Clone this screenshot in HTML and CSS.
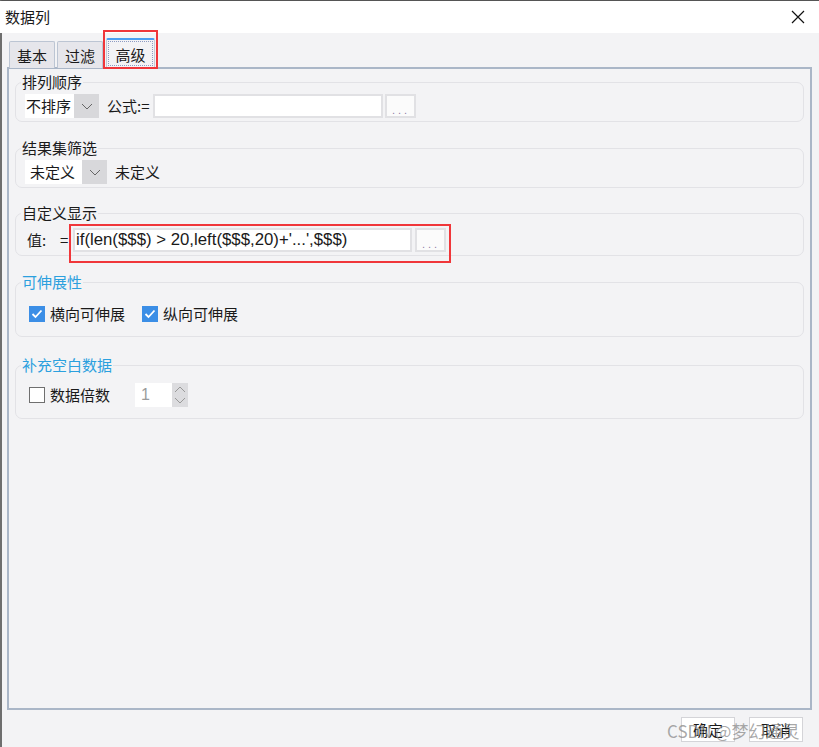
FILE: index.html
```html
<!DOCTYPE html>
<html lang="zh">
<head>
    <meta charset="UTF-8">
    <title>数据列</title>
    <link rel="stylesheet" href="styles.css">
</head>
<body>
    <div class="window">
        <div class="titlebar">
            <span class="title">数据列</span>
            <svg class="close" width="14" height="14" viewBox="0 0 14 14">
                <path d="M1 1 L13 13 M13 1 L1 13" stroke="#111" stroke-width="1.2" fill="none"/>
            </svg>
        </div>
        <div class="main">
            <div class="tabs">
                <div class="tab">基本</div>
                <div class="tab">过滤</div>
                <div class="tab active"><span class="focus">高级</span></div>
            </div>
            <div class="panel">
                <fieldset class="group g1">
                    <legend>排列顺序</legend>
                    <div class="row">
                        <div class="combo w1">
                            <span class="combo-text">不排序</span>
                            <span class="combo-btn">
                                <svg width="12" height="7" viewBox="0 0 12 7"><polyline points="1,1 6,6 11,1" fill="none" stroke="#666" stroke-width="1"/></svg>
                            </span>
                        </div>
                        <span class="label formula">公式:=</span>
                        <div class="text-input f1"></div>
                        <div class="dots-btn">...</div>
                    </div>
                </fieldset>

                <fieldset class="group g2">
                    <legend>结果集筛选</legend>
                    <div class="row">
                        <div class="combo w2">
                            <span class="combo-text">未定义</span>
                            <span class="combo-btn">
                                <svg width="12" height="7" viewBox="0 0 12 7"><polyline points="1,1 6,6 11,1" fill="none" stroke="#666" stroke-width="1"/></svg>
                            </span>
                        </div>
                        <span class="label undef">未定义</span>
                    </div>
                </fieldset>

                <fieldset class="group g3">
                    <legend>自定义显示</legend>
                    <div class="row">
                        <span class="label value">值:</span>
                        <span class="label eq">=</span>
                        <div class="marked">
                            <div class="text-input f3">if(len($$$) &gt; 20,left($$$,20)+'...',$$$)</div>
                            <div class="dots-btn">...</div>
                        </div>
                    </div>
                </fieldset>

                <fieldset class="group g4">
                    <legend class="blue">可伸展性</legend>
                    <div class="row">
                        <span class="check on">
                            <svg width="16" height="16" viewBox="0 0 16 16"><polyline points="3.5,8 6.5,11 12.5,4.5" fill="none" stroke="#fff" stroke-width="1.8"/></svg>
                        </span>
                        <span class="label">横向可伸展</span>
                        <span class="check on second">
                            <svg width="16" height="16" viewBox="0 0 16 16"><polyline points="3.5,8 6.5,11 12.5,4.5" fill="none" stroke="#fff" stroke-width="1.8"/></svg>
                        </span>
                        <span class="label">纵向可伸展</span>
                    </div>
                </fieldset>

                <fieldset class="group g5">
                    <legend class="blue">补充空白数据</legend>
                    <div class="row">
                        <span class="check"></span>
                        <span class="label">数据倍数</span>
                        <div class="spinner">
                            <span class="spin-text">1</span>
                            <span class="spin-btns">
                                <svg width="14" height="22" viewBox="0 0 14 22">
                                    <polyline points="2,8 7,3 12,8" fill="none" stroke="#999" stroke-width="1"/>
                                    <polyline points="2,14 7,19 12,14" fill="none" stroke="#999" stroke-width="1"/>
                                </svg>
                            </span>
                        </div>
                    </div>
                </fieldset>
            </div>
            <div class="buttons">
                <div class="btn">确定</div>
                <div class="btn">取消</div>
                <span class="watermark">CSDN @梦幻通灵</span>
            </div>
        </div>
    </div>
</body>
</html>
```

FILE: styles.css
```css
body {
    margin: 0;
    width: 819px;
    height: 747px;
    overflow: hidden;
    font-family: "Noto Sans CJK SC", "Noto Sans", sans-serif;
    font-size: 15px;
    color: #1a1a1a;
    background: #f3f3f5;
}
.window {
    height: 747px;
    box-sizing: border-box;
    border-left: 2px solid #6e6e6e;
    border-top: 1px solid #555;
    display: flex;
    flex-direction: column;
}
.titlebar {
    height: 32px;
    background: #fff;
    display: flex;
    align-items: center;
    justify-content: space-between;
    padding: 0 14px 0 5px;
    margin-left: -2px;
}
.title {
    font-size: 15px;
    line-height: 20px;
}
.close {
    display: block;
}
.main {
    flex: 1;
    background: #f3f3f5;
    padding: 5px 0 0 5px;
}
.tabs {
    display: flex;
    align-items: flex-end;
    gap: 2px;
    margin-left: 2px;
    height: 30px;
    position: relative;
    z-index: 2;
    margin-bottom: -1px;
}
.tab {
    height: 26px;
    padding: 0 6px;
    width: 32px;
    text-align: center;
    line-height: 27px;
    background: #e6e6eb;
    border: 1px solid #bcc5d3;
    border-bottom: none;
    border-radius: 2px 2px 0 0;
}
.tab.active {
    height: 30px;
    width: 49px;
    padding: 0 1px;
    margin-left: 1px;
    background: #f3f3f5;
    border-top: 2px solid #4b9ef2;
    border-color: #4b9ef2 #c5ccd8 #f3f3f5 #c5ccd8;
    position: relative;
    display: flex;
    justify-content: center;
    align-items: flex-start;
    box-sizing: border-box;
}
.tab.active::after {
    content: "";
    position: absolute;
    left: -4px;
    right: -4px;
    top: -10px;
    bottom: -1px;
    border: 2px solid #f0363a;
}
.focus {
    display: block;
    margin-top: 1px;
    width: 45px;
    height: 25px;
    line-height: 26px;
    border: 1px dotted #8e9cc3;
    box-sizing: border-box;
    text-align: center;
}
.panel {
    width: 805px;
    height: 643px;
    box-sizing: border-box;
    border: 2px solid #aab6c7;
    background: #f3f3f5;
    padding: 3px 6px 0 6px;
}
.group {
    margin: 0;
    padding: 0 8px 0 5px;
    border: 1px solid #e2e2e6;
    border-radius: 7px;
}
legend {
    padding: 0 1px;
    line-height: 20px;
    font-size: 15px;
}
legend.blue {
    color: #2ba0de;
}
.row {
    display: flex;
    align-items: center;
    height: 24px;
    margin-left: 4px;
}
.g1 .row { margin-top: 2px; }
.g1 { padding-bottom: 3px; }
.g2 { margin-top: 16px; padding-bottom: 3px; }
.g2 .row { margin-top: 2px; }
.g3 { margin-top: 15px; padding-bottom: 3px; }
.g3 .row { margin-top: 5px; }
.g4 { margin-top: 16px; padding-bottom: 10px; }
.g4 .row { margin-top: 10px; }
.g5 { margin-top: 18px; padding-bottom: 11px; }
.g5 .row { margin-top: 8px; }

.combo {
    display: flex;
    height: 24px;
}
.combo-text {
    background: #fff;
    line-height: 24px;
    padding-left: 1px;
}
.w1 .combo-text { width: 48px; }
.w2 .combo-text { width: 52px; padding-left: 5px; }
.combo-btn {
    width: 25px;
    background: #d8d8db;
    display: flex;
    align-items: center;
    justify-content: center;
}
.label {
    line-height: 20px;
    white-space: nowrap;
}
.formula {
    margin-left: 8px;
    width: 46px;
}
.undef {
    margin-left: 8px;
}
.value {
    margin-left: 2px;
    width: 33px;
}
.eq {
    width: 13px;
}
.text-input {
    height: 24px;
    box-sizing: border-box;
    background: #fff;
    border: 2px solid #e1e1e4;
    font-family: "Liberation Sans", Arial, sans-serif;
    font-size: 16.8px;
    line-height: 20px;
    padding-left: 2px;
    white-space: nowrap;
    overflow: hidden;
}
.f1 {
    width: 230px;
}
.f3 {
    width: 339px;
    padding-left: 1px;
}
.dots-btn {
    width: 31px;
    height: 24px;
    box-sizing: border-box;
    margin-left: 2px;
    background: #fbfbfb;
    border: 2px solid #e1e1e4;
    color: #8f7fa6;
    font-family: "Liberation Sans", Arial, sans-serif;
    font-size: 11px;
    letter-spacing: 3px;
    line-height: 28px;
    padding-left: 5px;
}
.marked .dots-btn {
    margin-left: 3px;
}
.marked {
    display: flex;
    position: relative;
}
.marked::after {
    content: "";
    position: absolute;
    left: -4px;
    right: -5px;
    top: -4px;
    bottom: -11px;
    border: 2px solid #f0363a;
}
.check {
    width: 16px;
    height: 16px;
    box-sizing: border-box;
    border: 1px solid #6f6f6f;
    background: #fff;
    margin: 0 5px 0 4px;
    display: block;
}
.check svg {
    display: block;
}
.check.on {
    border: none;
    background: #3b8ee6;
}
.check.second {
    margin-left: 17px;
}
.spinner {
    display: flex;
    height: 24px;
    margin-left: 25px;
}
.spin-text {
    width: 31px;
    background: #fff;
    color: #9b9b9b;
    font-family: "Liberation Sans", Arial, sans-serif;
    font-size: 16px;
    line-height: 24px;
    padding-left: 6px;
}
.spin-btns {
    width: 16px;
    background: #dcdcdf;
    display: flex;
    align-items: center;
    justify-content: center;
}
.buttons {
    display: flex;
    justify-content: flex-end;
    gap: 14px;
    margin-top: 7px;
    padding-right: 16px;
    position: relative;
}
.btn {
    width: 54px;
    height: 25px;
    box-sizing: border-box;
    background: #fff;
    border: 1px solid #d4d4d8;
    text-align: center;
    line-height: 23px;
    font-size: 15px;
}
.watermark {
    position: absolute;
    left: 660px;
    top: 1px;
    font-size: 17px;
    color: rgba(140, 140, 140, 0.75);
    white-space: nowrap;
    pointer-events: none;
    font-family: "Noto Sans CJK SC", sans-serif;
}
```
